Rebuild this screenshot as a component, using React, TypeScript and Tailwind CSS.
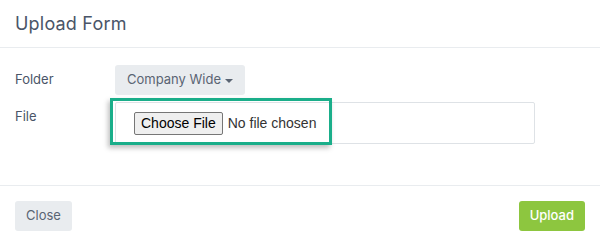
import React from "react";

export default function App() {
  return (
    <div className="h-[245px] w-[600px] bg-white font-['Inter',sans-serif] text-[#495057]">
      {/* header */}
      <div className="flex h-[48px] items-center border-b border-[#e9ecef] px-[15px]">
        <h5 className="text-[18px] text-[#4a5568] tracking-[0.2px]">Upload Form</h5>
      </div>

      {/* body */}
      <div className="flex h-[137px] flex-col gap-[7px] px-[15px] pt-[17px]">
        <div className="flex items-start">
          <label className="w-[100px] pt-[5px] text-[13px] text-[#4a5568]">Folder</label>
          <button className="flex h-[30px] items-center gap-[4px] rounded-[3px] bg-[#e9ecef] px-[12px] text-[13px] text-[#5a6473]">
            Company Wide
            <span className="mt-[1px] h-0 w-0 border-x-[4px] border-t-[4px] border-x-transparent border-t-[#5a6473]" />
          </button>
        </div>
        <div className="flex items-start">
          <label className="w-[100px] pt-[5px] text-[13px] text-[#4a5568]">File</label>
          <div className="relative flex h-[42px] w-[420px] items-center rounded-[2px] border border-[#dee2e6] pl-[18px]">
            <input
              type="file"
              className="font-['Liberation_Sans',Arial,sans-serif] text-[14px] text-[#333] file:mr-[5px] file:h-[23px] file:rounded-[2px] file:border file:border-[#767676] file:bg-[#efefef] file:px-[6px] file:text-[14px] file:text-black"
            />
            {/* highlight annotation */}
            <div className="pointer-events-none absolute left-[-6px] top-[-5px] h-[47px] w-[222px] border-[3px] border-[#1aae8a] shadow-[-2px_3px_5px_rgba(0,0,0,0.25)]" />
          </div>
        </div>
      </div>

      {/* footer */}
      <div className="flex h-[60px] items-center justify-between border-t border-[#e9ecef] px-[15px]">
        <button className="h-[30px] rounded-[3px] bg-[#e9ecef] px-[11px] text-[13px] text-[#5a6473]">Close</button>
        <button className="h-[30px] rounded-[3px] bg-[#8dc63f] px-[11px] text-[13px] font-medium text-white">Upload</button>
      </div>
    </div>
  );
}
